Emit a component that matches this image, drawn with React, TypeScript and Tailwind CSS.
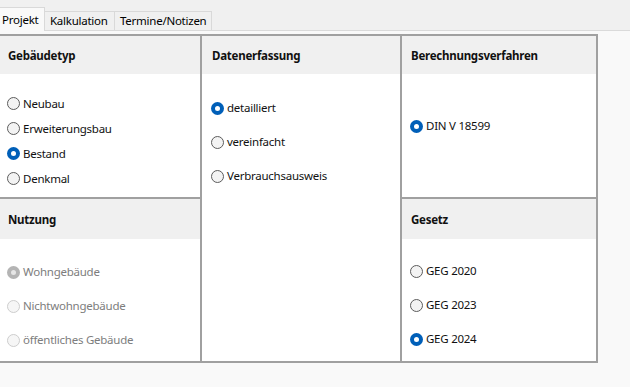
import React from "react";

type RState = "on" | "off" | "don" | "doff";

function Radio({ s }: { s: RState }) {
  if (s === "on")
    return (
      <span className="w-[13px] h-[13px] rounded-full bg-[#005fb8] flex items-center justify-center shrink-0">
        <span className="w-[5px] h-[5px] rounded-full bg-white" />
      </span>
    );
  if (s === "don")
    return (
      <span className="w-[13px] h-[13px] rounded-full bg-[#b4b4b4] flex items-center justify-center shrink-0">
        <span className="w-[5px] h-[5px] rounded-full bg-[#e6e6e6]" />
      </span>
    );
  if (s === "doff")
    return <span className="w-[13px] h-[13px] rounded-full border border-[#cdcdcd] bg-[#f6f6f6] shrink-0" />;
  return <span className="w-[13px] h-[13px] rounded-full border border-[#5c5c5c] bg-[#f3f3f3] shrink-0" />;
}

function Row({ label, s, h }: { label: string; s: RState; h: string }) {
  const disabled = s === "don" || s === "doff";
  return (
    <div className={`flex items-center gap-[3px] ${h}`}>
      <Radio s={s} />
      <span className={disabled ? "text-[#7d7d7d]" : "text-[#111]"}>{label}</span>
    </div>
  );
}

function Header({ title, pl, h }: { title: string; pl: string; h: string }) {
  return (
    <div className={`bg-[#f0f0f0] flex items-center pt-[1px] font-bold text-[#111] ${h} ${pl}`}>{title}</div>
  );
}

export default function App() {
  return (
    <div
      className="w-[630px] h-[387px] bg-[#f9f9f9] text-[11.5px] tracking-[-0.25px] leading-none"
      style={{ fontFamily: '"Noto Sans", "Open Sans", sans-serif' }}
    >
      {/* tab strip */}
      <div className="h-[31px] bg-[#f0f0f0] border-b border-[#dadada] flex items-end relative">
        <div className="h-[24px] w-[45px] bg-[#f9f9f9] border-t border-r border-[#d9d9d9] flex items-center pl-[2px] -mb-[1px] relative z-10">
          Projekt
        </div>
        <div className="h-[19px] w-[70px] border-t border-r border-[#d9d9d9] flex items-center pl-[5px]">
          Kalkulation
        </div>
        <div className="h-[19px] w-[97px] border-t border-r border-[#d9d9d9] flex items-center pl-[5px]">
          Termine/Notizen
        </div>
      </div>
      <div className="pt-[3px]">
        <div className="w-[598px] border-t-2 border-r-2 border-b-2 border-[#a0a0a0] grid grid-cols-[202px_200px_194px]">
          {/* col 1 */}
          <div className="flex flex-col border-r-2 border-[#a0a0a0]">
            <div className="border-b-2 border-[#a0a0a0]">
              <Header title="Gebäudetyp" pl="pl-[8px]" h="h-[38px]" />
              <div className="bg-white h-[123px] pt-[17px] pl-[7px]">
                <Row label="Neubau" s="off" h="h-[25px]" />
                <Row label="Erweiterungsbau" s="off" h="h-[25px]" />
                <Row label="Bestand" s="on" h="h-[25px]" />
                <Row label="Denkmal" s="off" h="h-[25px]" />
              </div>
            </div>
            <div>
              <Header title="Nutzung" pl="pl-[8px]" h="h-[40px]" />
              <div className="bg-white h-[122px] pt-[16px] pl-[7px]">
                <Row label="Wohngebäude" s="don" h="h-[34px]" />
                <Row label="Nichtwohngebäude" s="doff" h="h-[34px]" />
                <Row label="öffentliches Gebäude" s="doff" h="h-[34px]" />
              </div>
            </div>
          </div>
          {/* col 2 */}
          <div className="flex flex-col border-r-2 border-[#a0a0a0]">
            <Header title="Datenerfassung" pl="pl-[10px]" h="h-[38px]" />
            <div className="bg-white flex-1 pt-[17px] pl-[9px]">
              <Row label="detailliert" s="on" h="h-[34px]" />
              <Row label="vereinfacht" s="off" h="h-[34px]" />
              <Row label="Verbrauchsausweis" s="off" h="h-[34px]" />
            </div>
          </div>
          {/* col 3 */}
          <div className="flex flex-col">
            <div className="border-b-2 border-[#a0a0a0]">
              <Header title="Berechnungsverfahren" pl="pl-[9px]" h="h-[38px]" />
              <div className="bg-white h-[123px] pt-[35px] pl-[8px]">
                <Row label="DIN V 18599" s="on" h="h-[34px]" />
              </div>
            </div>
            <div>
              <Header title="Gesetz" pl="pl-[9px]" h="h-[40px]" />
              <div className="bg-white h-[122px] pt-[15px] pl-[8px]">
                <Row label="GEG 2020" s="off" h="h-[34px]" />
                <Row label="GEG 2023" s="off" h="h-[34px]" />
                <Row label="GEG 2024" s="on" h="h-[34px]" />
              </div>
            </div>
          </div>
        </div>
      </div>
    </div>
  );
}
